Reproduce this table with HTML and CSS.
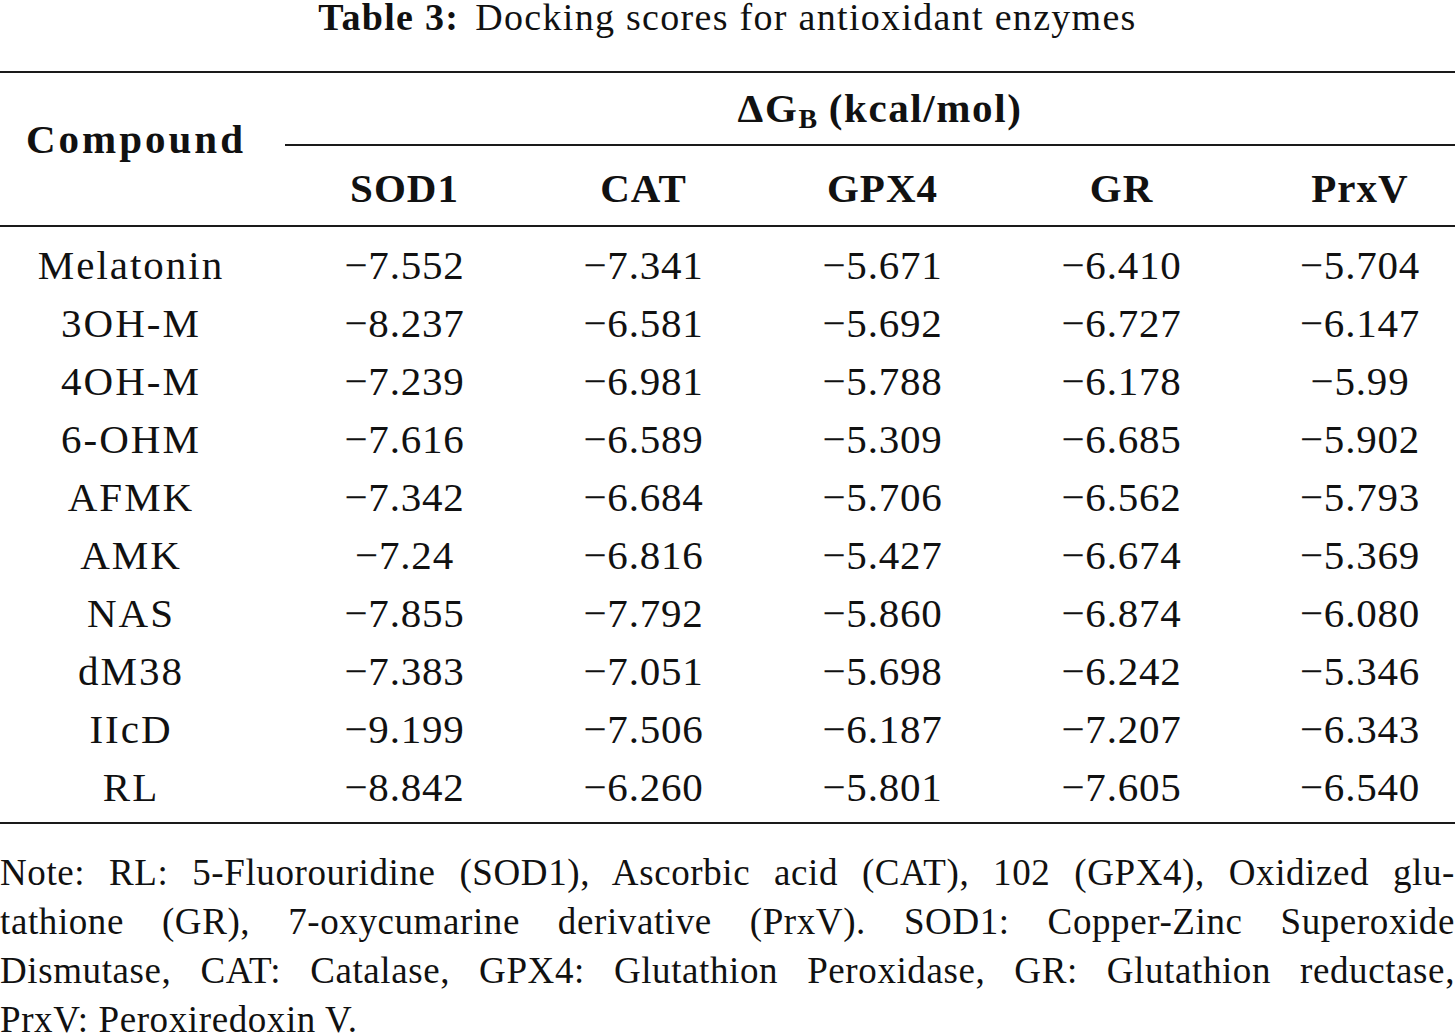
FILE: index.html
```html
<!DOCTYPE html>
<html lang="en">
<head>
<meta charset="utf-8">
<title>Table 3: Docking scores for antioxidant enzymes</title>
<link rel="stylesheet" href="styles.css">
</head>
<body>
<div class="page">
  <div class="caption"><b class="cap-label">Table 3:</b><span class="cap-text">Docking scores for antioxidant enzymes</span></div>
  <table class="scores">
    <colgroup>
      <col class="c0"><col class="cn"><col class="cn"><col class="cn"><col class="cn"><col class="c5">
    </colgroup>
    <thead>
      <tr class="h1">
        <th class="compound" rowspan="2">Compound</th>
        <th class="dg" colspan="5">ΔG<sub>B</sub> (kcal/mol)</th>
      </tr>
      <tr class="h2">
        <th>SOD1</th><th>CAT</th><th>GPX4</th><th>GR</th><th class="last">PrxV</th>
      </tr>
    </thead>
    <tbody>
      <tr class="first"><td class="name">Melatonin</td><td>−7.552</td><td>−7.341</td><td>−5.671</td><td>−6.410</td><td class="last">−5.704</td></tr>
      <tr><td class="name">3OH-M</td><td>−8.237</td><td>−6.581</td><td>−5.692</td><td>−6.727</td><td class="last">−6.147</td></tr>
      <tr><td class="name">4OH-M</td><td>−7.239</td><td>−6.981</td><td>−5.788</td><td>−6.178</td><td class="last">−5.99</td></tr>
      <tr><td class="name">6-OHM</td><td>−7.616</td><td>−6.589</td><td>−5.309</td><td>−6.685</td><td class="last">−5.902</td></tr>
      <tr><td class="name">AFMK</td><td>−7.342</td><td>−6.684</td><td>−5.706</td><td>−6.562</td><td class="last">−5.793</td></tr>
      <tr><td class="name">AMK</td><td>−7.24</td><td>−6.816</td><td>−5.427</td><td>−6.674</td><td class="last">−5.369</td></tr>
      <tr><td class="name">NAS</td><td>−7.855</td><td>−7.792</td><td>−5.860</td><td>−6.874</td><td class="last">−6.080</td></tr>
      <tr><td class="name">dM38</td><td>−7.383</td><td>−7.051</td><td>−5.698</td><td>−6.242</td><td class="last">−5.346</td></tr>
      <tr><td class="name">IIcD</td><td>−9.199</td><td>−7.506</td><td>−6.187</td><td>−7.207</td><td class="last">−6.343</td></tr>
      <tr class="final"><td class="name">RL</td><td>−8.842</td><td>−6.260</td><td>−5.801</td><td>−7.605</td><td class="last">−6.540</td></tr>
    </tbody>
  </table>
  <p class="note">
    <span class="jl">Note: RL: 5-Fluorouridine (SOD1), Ascorbic acid (CAT), 102 (GPX4), Oxidized glu-</span>
    <span class="jl">tathione (GR), 7-oxycumarine derivative (PrxV). SOD1: Copper-Zinc Superoxide</span>
    <span class="jl">Dismutase, CAT: Catalase, GPX4: Glutathion Peroxidase, GR: Glutathion reductase,</span>
    <span class="ll">PrxV: Peroxiredoxin V.</span>
  </p>
</div>
</body>
</html>
```
FILE: styles.css
```css
html, body {
  margin: 0;
  padding: 0;
  background: #ffffff;
}

body {
  font-family: "Liberation Serif", "Times New Roman", serif;
  color: #111111;
  overflow: hidden;
}

.page {
  width: 1455px;
}

.caption {
  text-align: center;
  font-size: 38px;
  line-height: 34px;
  letter-spacing: 1.3px;
  margin-bottom: 37px;
}

.cap-label {
  font-weight: bold;
}

.cap-text {
  margin-left: 16px;
}

.scores {
  width: 1455px;
  table-layout: fixed;
  border-collapse: separate;
  border-spacing: 0;
  font-size: 41px;
}

.c0 { width: 285px; }
.cn { width: 239px; }
.c5 { width: 214px; }

.scores th,
.scores td {
  padding: 0;
  text-align: center;
  white-space: nowrap;
}

.scores th {
  font-weight: bold;
  letter-spacing: 1px;
  line-height: 48px;
}

.h1 th {
  border-top: 2px solid #1a1a1a;
}

.scores th.compound {
  vertical-align: middle;
  padding-right: 13px;
  padding-bottom: 20px;
  letter-spacing: 3px;
  border-bottom: 2px solid #1a1a1a;
}

.scores th.dg {
  padding-top: 11px;
  padding-bottom: 12px;
  padding-left: 20px;
  letter-spacing: 1.6px;
  border-bottom: 2px solid #1a1a1a;
}

.dg sub {
  font-size: 0.68em;
  line-height: 0;
  vertical-align: -0.22em;
  letter-spacing: 0;
}

.h2 th {
  padding-top: 18px;
  padding-bottom: 13px;
  border-bottom: 2px solid #1a1a1a;
}

.scores th.last,
.scores td.last {
  padding-left: 24px;
}

.scores td {
  line-height: 58px;
  letter-spacing: 0.8px;
}

.scores td.name {
  padding-right: 23px;
  letter-spacing: 2px;
}

.first td {
  padding-top: 9px;
}

.final td {
  padding-bottom: 6px;
  border-bottom: 2px solid #1a1a1a;
}

.note {
  margin: 24px 0 0 0;
  font-size: 37px;
  line-height: 49px;
  letter-spacing: 0.6px;
}

.note .jl {
  display: block;
  text-align: justify;
  text-align-last: justify;
}

.note .ll {
  display: block;
  text-align: left;
}
```
